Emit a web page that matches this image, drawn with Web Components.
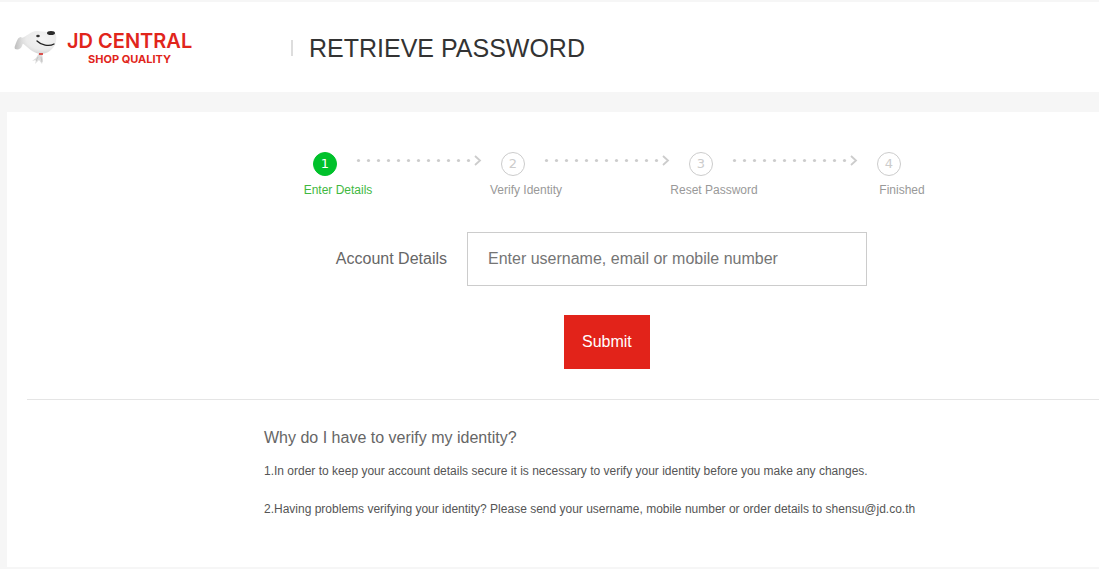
<!DOCTYPE html>
<html lang="en">
<head>
  <meta charset="utf-8">
  <meta name="viewport" content="width=device-width, initial-scale=1">
  <title>Retrieve Password</title>
  <style>
    body {
      margin: 0;
      background: #f6f6f6;
      color: #666;
      font: 12px/18px "Liberation Sans", Arial, sans-serif;
      overflow-x: hidden;
    }
  </style>
</head>
<body>
  <retrieve-page></retrieve-page>

  <script>
    class JdLogo extends HTMLElement {
      constructor() {
        super();
        this.attachShadow({ mode: 'open' });
      }

      connectedCallback() {
        this.shadowRoot.innerHTML = `
          <style>
            :host { display: block; }
            a {
              display: flex;
              align-items: center;
              gap: 8px;
              color: #e1251b;
              text-decoration: none;
              font-family: Inter, sans-serif;
              white-space: nowrap;
            }
            svg { display: block; }
            .words { display: flex; flex-direction: column; align-items: center; }
            .name { font-size: 20px; font-weight: 600; line-height: 22px; }
            .tag { font-size: 11px; font-weight: 700; line-height: 14px; }
          </style>
          <a href="#">
            <svg width="45" height="38" viewBox="0 0 45 38" aria-hidden="true">
              <defs>
                <radialGradient id="head" cx="0.6" cy="0.35" r="0.75">
                  <stop offset="0" stop-color="#f4f4f4"/>
                  <stop offset="0.6" stop-color="#ebebeb"/>
                  <stop offset="1" stop-color="#cccccc"/>
                </radialGradient>
                <linearGradient id="ear" x1="0" x2="1">
                  <stop offset="0" stop-color="#bdbdbd"/>
                  <stop offset="1" stop-color="#e6e6e6"/>
                </linearGradient>
              </defs>
              <path d="M25 24 L22 29 L18 32 L22 31 L21 35 L25 31 L28 35 L29 31 L28 24Z" fill="#dcdcdc"/>
              <path d="M24 28 L22 32 M27 28 L28 33" stroke="#bbb" stroke-width="0.7" fill="none"/>
              <path d="M7 8 C4 8 3 12 2 14 C1 17 0 18 1 20 C4 21 7 20 8 17 C9 14 10 13 10 11Z" fill="url(#ear)"/>
              <path d="M7 9 C13 8 16 2 23 2 C29 2 34 4 39 2 C43 3 43 11 41 16 C38 21 33 25 27 25 C18 24 14 18 8 14Z" fill="url(#head)"/>
              <path d="M25 25 H29" stroke="#d9211c" stroke-width="1.5"/>
              <ellipse cx="37" cy="4" rx="4" ry="2" fill="#2a2a2a"/>
              <ellipse cx="24" cy="7" rx="1.8" ry="1.2" fill="#333"/>
              <path d="M23 12 C27 16 35 18 40 15" fill="none" stroke="#222" stroke-width="1.3" stroke-linecap="round"/>
            </svg>
            <span class="words">
              <span class="name">JD CENTRAL</span>
              <span class="tag">SHOP QUALITY</span>
            </span>
          </a>
        `;
      }
    }

    class PageHeader extends HTMLElement {
      constructor() {
        super();
        this.attachShadow({ mode: 'open' });
      }

      connectedCallback() {
        this.shadowRoot.innerHTML = `
          <style>
            :host { display: block; background: #fff; border-top: 2px solid #f6f6f6; }
            header { display: flex; align-items: center; padding: 27px 0 25px 14px; }
            jd-logo { flex: 0 0 277px; }
            .bar { width: 2px; height: 16px; background: #ddd; }
            h1 {
              margin: 0;
              padding-left: 16px;
              color: #333;
              font-size: 25px;
              font-weight: 400;
              line-height: 38px;
            }
          </style>
          <header>
            <jd-logo></jd-logo>
            <span class="bar"></span>
            <h1><slot></slot></h1>
          </header>
        `;
      }
    }

    class StepItem extends HTMLElement {
      constructor() {
        super();
        this.attachShadow({ mode: 'open' });
      }

      // 12 dots followed by a chevron
      getArrow() {
        if (this.hasAttribute('last')) return '';
        let dots = '';
        for (let i = 0; i < 12; i++) {
          dots += `<circle cx="${2.5 + i * 10}" cy="6.5" r="1.6"/>`;
        }
        return `
          <svg width="126" height="12" viewBox="0 0 126 12" fill="#ccc" aria-hidden="true">
            ${dots}
            <path d="M119 2 L124 6.5 L119 11" fill="none" stroke="#ccc" stroke-width="1.8"/>
          </svg>
        `;
      }

      connectedCallback() {
        this.shadowRoot.innerHTML = `
          <style>
            :host { display: block; flex: none; width: 188px; color: #999; text-align: center; }
            /* the arrow runs on into the next step's column */
            .mark { display: flex; gap: 19px; margin: 0 0 5px 69px; }
            .num {
              box-sizing: border-box;
              flex: none;
              width: 24px;
              height: 24px;
              border: 1px solid #ccc;
              border-radius: 50%;
              color: #ccc;
              font: 13px/22px "DejaVu Sans", Verdana, sans-serif;
            }
            svg { flex: none; margin-top: 2px; }
            :host([current]) { color: #3fb83f; }
            :host([current]) .num { background: #00c12b; border-color: #00c12b; color: #fff; }
          </style>
          <div class="mark">
            <span class="num">${this.getAttribute('num')}</span>
            ${this.getArrow()}
          </div>
          <slot></slot>
        `;
      }
    }

    class StepBar extends HTMLElement {
      constructor() {
        super();
        this.attachShadow({ mode: 'open' });
      }

      connectedCallback() {
        this.shadowRoot.innerHTML = `
          <style>
            :host { display: flex; }
          </style>
          <slot></slot>
        `;
      }
    }

    class AccountForm extends HTMLElement {
      constructor() {
        super();
        this.attachShadow({ mode: 'open' });
      }

      connectedCallback() {
        this.shadowRoot.innerHTML = `
          <style>
            :host { display: block; font-size: 16px; }
            .row { display: flex; align-items: center; gap: 20px; }
            label { flex: 0 0 440px; text-align: right; }
            input {
              box-sizing: border-box;
              width: 400px;
              height: 54px;
              padding: 0 20px;
              border: 1px solid #ccc;
              background: #fff;
              color: #333;
              font: inherit;
            }
            input::placeholder { color: #757575; }
            button {
              display: block;
              height: 54px;
              margin: 29px 0 0 557px;
              padding: 0 18px;
              border: 0;
              background: #e2231a;
              color: #fff;
              font: inherit;
            }
          </style>
          <form>
            <div class="row">
              <label for="account">Account Details</label>
              <input id="account" type="text" placeholder="Enter username, email or mobile number">
            </div>
            <button type="button">Submit</button>
          </form>
        `;
      }
    }

    class HelpNotes extends HTMLElement {
      constructor() {
        super();
        this.attachShadow({ mode: 'open' });
      }

      connectedCallback() {
        this.shadowRoot.innerHTML = `
          <style>
            :host { display: block; }
            section { padding: 28px 0 49px 237px; border-top: 1px solid #e5e5e5; }
            h2 { margin: 0 0 14px; font-size: 16px; font-weight: 400; line-height: 20px; }
          </style>
          <section>
            <h2><slot name="title"></slot></h2>
            <slot></slot>
          </section>
        `;
      }
    }

    class RetrievePage extends HTMLElement {
      constructor() {
        super();
        this.attachShadow({ mode: 'open' });
      }

      connectedCallback() {
        this.shadowRoot.innerHTML = `
          <style>
            :host { display: block; }
            main { margin: 20px 0 2px 7px; padding-top: 40px; background: #fff; }
            step-bar { padding-left: 237px; }
            account-form { padding: 33px 0 30px; }
            help-notes { margin-left: 20px; }
            p { margin: 0 0 20px; color: #555; }
            p:last-child { margin: 0; }
          </style>
          <page-header>RETRIEVE PASSWORD</page-header>
          <main>
            <step-bar>
              <step-item num="1" current>Enter Details</step-item>
              <step-item num="2">Verify Identity</step-item>
              <step-item num="3">Reset Password</step-item>
              <step-item num="4" last>Finished</step-item>
            </step-bar>
            <account-form></account-form>
            <help-notes>
              <span slot="title">Why do I have to verify my identity?</span>
              <p>1.In order to keep your account details secure it is necessary to verify your identity before you make any changes.</p>
              <p>2.Having problems verifying your identity? Please send your username, mobile number or order details to shensu@jd.co.th</p>
            </help-notes>
          </main>
        `;
      }
    }

    customElements.define('jd-logo', JdLogo);
    customElements.define('page-header', PageHeader);
    customElements.define('step-item', StepItem);
    customElements.define('step-bar', StepBar);
    customElements.define('account-form', AccountForm);
    customElements.define('help-notes', HelpNotes);
    customElements.define('retrieve-page', RetrievePage);
  </script>
</body>
</html>
